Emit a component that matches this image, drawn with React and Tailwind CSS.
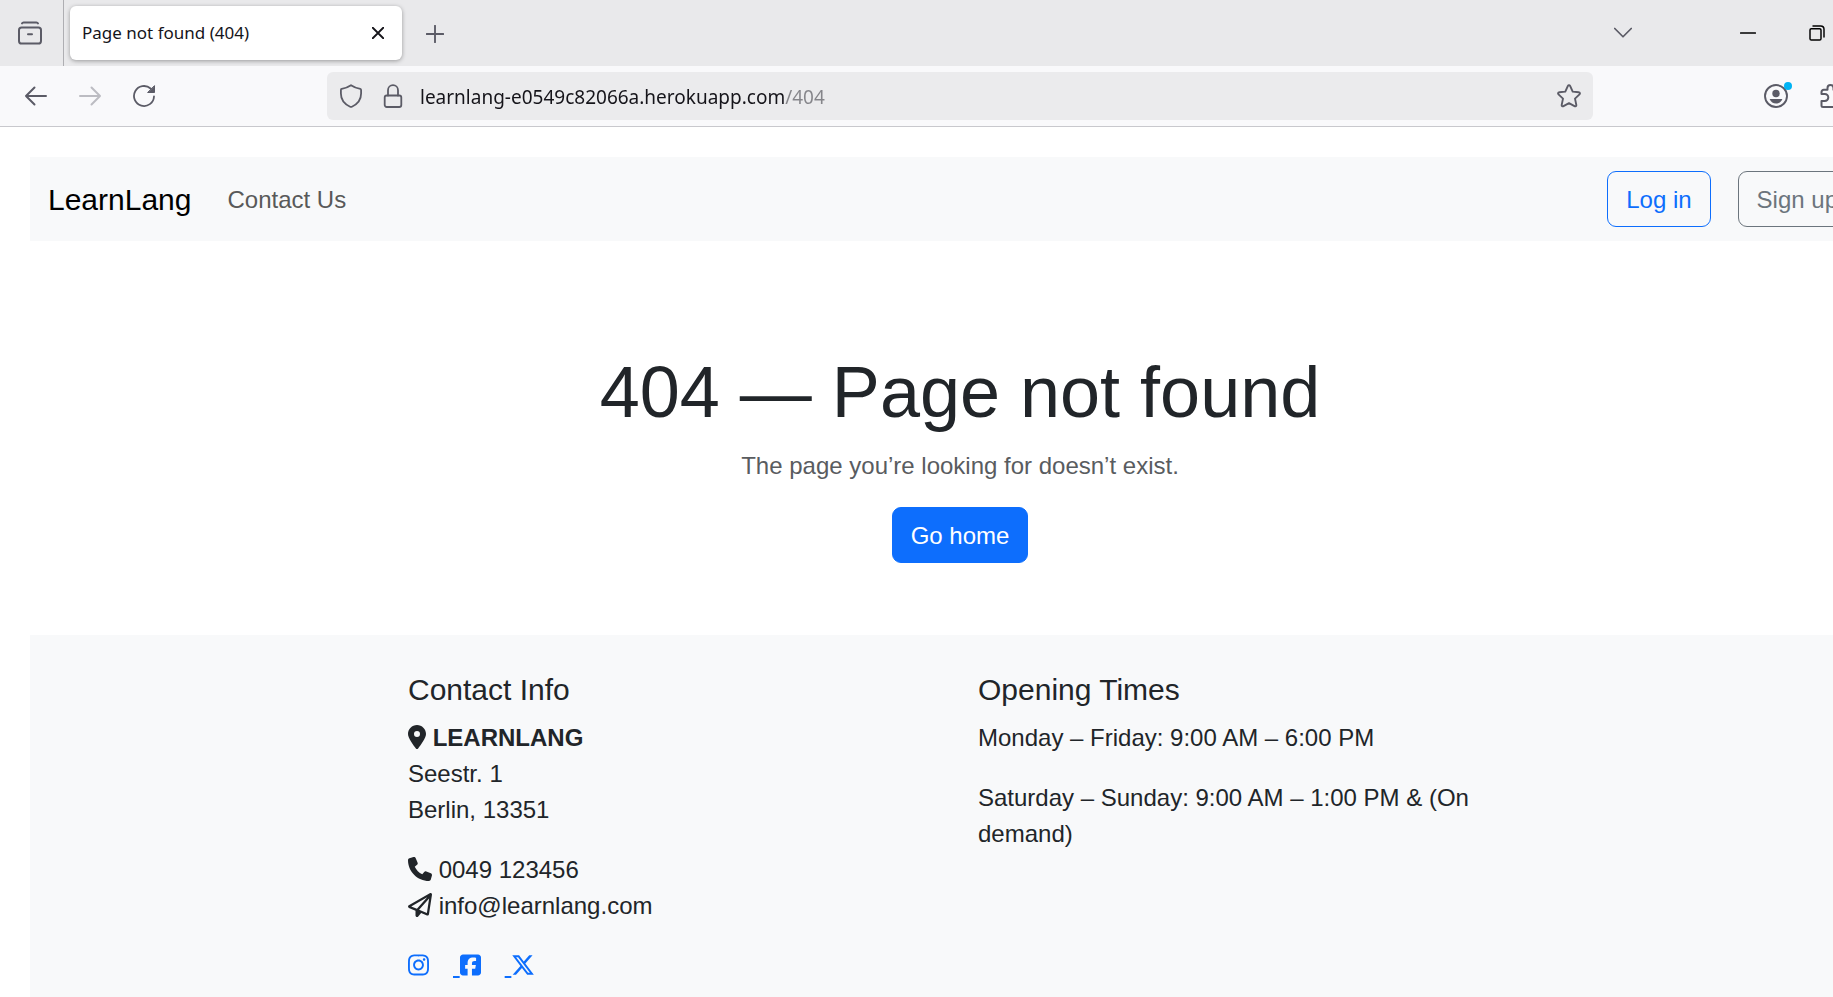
import { FaLocationDot, FaPhone, FaRegPaperPlane, FaInstagram, FaSquareFacebook, FaXTwitter } from "react-icons/fa6";

function Icon({ size = "size-6", color = "text-[#5b5b66]", width = 1.8, children }) {
  return (
    <svg viewBox="0 0 24 24" aria-hidden="true" className={`${size} ${color} block shrink-0`} fill="none" stroke="currentColor" strokeWidth={width} strokeLinecap="round" strokeLinejoin="round">
      {children}
    </svg>
  );
}

function TabStrip() {
  return (
    <div className="flex h-[66px] items-center bg-[#e9e9eb]">
      <button aria-label="View recent browsing" className="flex h-full w-16 shrink-0 items-center justify-center border-r border-[#aeaeb2] pr-1">
        <Icon width={2}>
          <rect x="1" y="6.5" width="22" height="16" rx="2.6" />
          <path d="M4 2.400C4.400 1.500 5 1.400 5.600 1.400h12.800c0.700 0 1.200 0.100 1.600 1M10 13.200h4" />
        </Icon>
      </button>
      <div className="ml-1.5 flex h-[54px] w-[332px] shrink-0 items-center justify-between rounded-md bg-white pr-[18px] pl-3 shadow-[0_1px_4px_rgba(0,0,0,0.35)]">
        <span className="text-[17px] text-[#15141a]">Page not found (404)</span>
        <button aria-label="Close tab">
          <Icon size="size-3" color="text-[#15141a]" width={3.6}>
            <path d="M1.500 1.500l21 21M22.500 1.500l-21 21" />
          </Icon>
        </button>
      </div>
      <button aria-label="New tab" className="ml-6 pt-0.5">
        <Icon size="size-[18px]" width={2.5}>
          <path d="M12 1v22M1 12h22" />
        </Icon>
      </button>
      <div className="ml-auto flex shrink-0 items-center">
        <button aria-label="List all tabs" className="mr-[108px]">
          <Icon size="size-[18px]" width={2.3}>
            <path d="M1 6l11 11L23 6" />
          </Icon>
        </button>
        <button aria-label="Minimize" className="mr-[53px]">
          <Icon size="size-4" color="text-black" width={2.5}>
            <path d="M1 12h22" />
          </Icon>
        </button>
        <button aria-label="Restore" className="mr-[95px]">
          <Icon size="size-4" color="text-black" width={2.2}>
            <rect x="1.500" y="5.500" width="16.500" height="17" rx="2" />
            <path d="M6 1.500h11.500a5 5 0 0 1 5 5v11.500" />
          </Icon>
        </button>
      </div>
    </div>
  );
}

function Toolbar() {
  return (
    <div className="flex h-[61px] items-center border-b border-[#c8c8cd] bg-[#f9f9fb]">
      <div className="flex w-[327px] shrink-0 items-center gap-[30px] pl-6">
        <button aria-label="Back">
          <Icon width={2}><path d="M22 12H2M10.500 3.500L2 12l8.500 8.500" /></Icon>
        </button>
        <button aria-label="Forward" disabled>
          <Icon width={2} color="text-[#bcbcc2]"><path d="M2 12h20M13.500 3.500L22 12l-8.500 8.500" /></Icon>
        </button>
        <button aria-label="Reload">
          <Icon width={1.8}>
            <path d="M22 12.500A10 10 0 1 1 18.600 4.500" />
            <path d="M22.500 2v6.500H16z" fill="currentColor" strokeWidth="1" />
          </Icon>
        </button>
      </div>
      <div className="flex h-12 flex-1 items-center rounded-md bg-[#ebebed] px-3">
        <Icon>
          <path d="M12 1.200c2.800 1.900 6 3.100 9.300 3.700 0.500 0.100 0.800 0.500 0.800 1v3.600c0 6-4 10.800-9.200 13.200a2 2 0 0 1-1.800 0C5.900 20.300 1.900 15.500 1.900 9.500V5.900c0-0.500 0.300-0.900 0.800-1C6 4.300 9.200 3.100 12 1.200z" />
        </Icon>
        <button aria-label="Site information" className="ml-[18px]">
          <Icon>
            <rect x="3.700" y="11.500" width="16.600" height="11.500" rx="2" />
            <path d="M7 11.500V6.200a5 5 0 0 1 10 0v5.300" />
          </Icon>
        </button>
        <input
          aria-label="Address"
          type="text"
          defaultValue="learnlang-e0549c82066a.herokuapp.com/404"
          className="ml-[15px] min-w-0 flex-1 bg-[linear-gradient(to_right,#15141a_365px,#85858a_365px)] bg-clip-text pt-0.5 text-[19px] text-transparent outline-none"
        />
        <button aria-label="Bookmark this page">
          <Icon width={1.9}>
            <path d="M10.900 1.900a1.250 1.250 0 0 1 2.200 0l2.600 5.700 6.100.7c1.100.1 1.500 1.400.7 2.100l-4.500 4.200 1.300 6.300c.2 1-.9 1.800-1.800 1.300L12 19.100l-5.500 3.100c-.9.500-2-.3-1.800-1.300L6 14.600l-4.500-4.200c-.8-.7-.4-2 .7-2.100l6.100-.7z" />
          </Icon>
        </button>
      </div>
      <div className="flex w-[327px] shrink-0 items-center justify-end">
        <button aria-label="Account" className="relative mr-8">
          <Icon width={1.9}>
            <circle cx="12" cy="12" r="11" />
            <circle cx="12" cy="9.500" r="3.700" fill="currentColor" stroke="none" />
            <path d="M5.600 15h12.800c-1.200 3.200-3.700 4.500-6.400 4.500S6.800 18.200 5.600 15z" fill="currentColor" stroke="none" />
          </Icon>
          <span className="absolute -top-0.5 -right-1 size-2 rounded-full bg-[#00b3f4]" />
        </button>
        <button aria-label="Extensions" className="mr-[76px]">
          <Icon width={2}>
            <path d="M1.500 10V8a2.200 2.200 0 0 1 2.200-2.200h3.800V4a3 3 0 0 1 6 0v1.800h3.800a2 2 0 0 1 2 2V21a2 2 0 0 1-2 2H3a1.500 1.500 0 0 1-1.500-1.500V17h3.300a3 3 0 0 0 0-7z" />
          </Icon>
        </button>
      </div>
    </div>
  );
}

function SiteNav() {
  return (
    <nav className="flex h-[84px] items-center bg-[#f8f9fa] pr-[33px] pl-[18px]">
      <a href="#" className="text-[30px] leading-[45px] text-black">LearnLang</a>
      <a href="#" className="ml-9 pt-0.5 text-[#595959]">Contact Us</a>
      <div className="ml-auto flex gap-[27px]">
        <a href="#" className="rounded-[9px] border border-[#0d6efd] px-[18px] pt-[10px] pb-2 text-[#0d6efd]">Log in</a>
        <a href="#" className="rounded-[9px] border border-[#6c757d] px-[18px] pt-[10px] pb-2 text-[#6c757d]">Sign up</a>
      </div>
    </nav>
  );
}

function Hero() {
  return (
    <main className="pt-[108px] pb-[72px] text-center">
      <h1 className="mb-[13px] text-[72px] leading-[86px]">404 — Page not found</h1>
      <p className="mb-[23px] text-[#595c5f]">The page you’re looking for doesn’t exist.</p>
      <a href="#" className="inline-block rounded-[9px] border border-[#0d6efd] bg-[#0d6efd] px-[18px] pt-[10px] pb-2 align-top text-white">Go home</a>
    </main>
  );
}

function Footer() {
  return (
    <footer className="bg-[#f8f9fa] pt-[37px] pb-9">
      <div className="mx-auto grid max-w-[1140px] grid-cols-2">
        <section className="px-[18px]">
          <h2 className="mb-3 text-[30px]/9">Contact Info</h2>
          <address className="not-italic">
            <p className="mb-6">
              <FaLocationDot className="inline h-6 w-[18px] align-[-3px]" /> <strong>LEARNLANG</strong>
              <br />
              Seestr. 1
              <br />
              Berlin, 13351
            </p>
            <p className="mb-6">
              <FaPhone className="inline size-6 align-[-3px]" /> 0049 123456
              <br />
              <FaRegPaperPlane className="inline size-6 align-[-3px]" /> info@learnlang.com
            </p>
          </address>
          <p className="whitespace-pre text-[#0d6efd]">
            <a href="#" aria-label="Instagram" className="mr-6 underline"><FaInstagram className="inline h-6 w-[21px] align-[-3px]" /></a>
            <a href="#" aria-label="Facebook" className="mr-6 underline">{" "}<FaSquareFacebook className="inline h-6 w-[21px] align-[-3px]" /></a>
            <a href="#" aria-label="X" className="underline">{" "}<FaXTwitter className="inline size-6 align-[-3px]" /></a>
          </p>
        </section>
        <section className="px-[18px]">
          <h2 className="mb-3 text-[30px]/9">Opening Times</h2>
          <p className="mb-6">Monday – Friday: 9:00 AM – 6:00 PM</p>
          <p className="mb-6">Saturday – Sunday: 9:00 AM – 1:00 PM &amp; (On demand)</p>
        </section>
      </div>
    </footer>
  );
}

export default function App() {
  return (
    <div className="min-h-screen overflow-x-clip bg-white">
      <div className="-mr-[87px]">
        <header className="font-['Noto_Sans',sans-serif]">
          <TabStrip />
          <Toolbar />
        </header>
        <div className="px-[30px] pt-[30px] font-['Liberation_Sans',Arial,sans-serif] text-2xl/9 text-[#212529]">
          <SiteNav />
          <Hero />
          <Footer />
        </div>
      </div>
    </div>
  );
}
